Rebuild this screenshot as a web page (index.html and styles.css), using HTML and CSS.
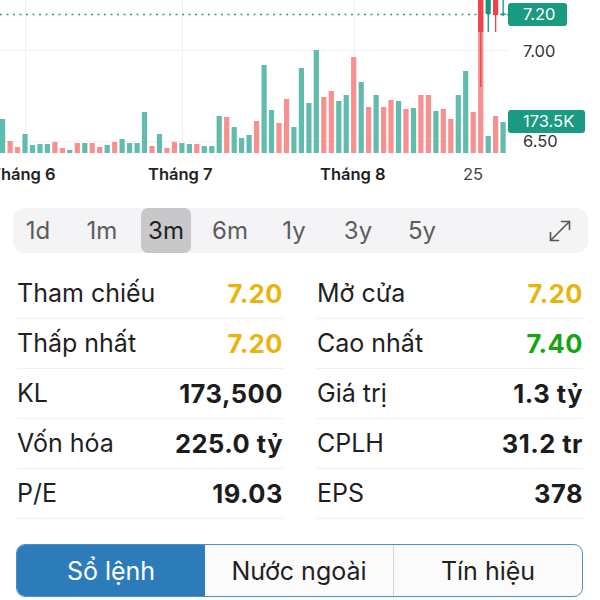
FILE: index.html
```html
<!DOCTYPE html>
<html lang="vi">
<head>
  <meta charset="UTF-8">
  <meta name="viewport" content="width=device-width, initial-scale=1.0">
  <title>Chart</title>
  <link rel="stylesheet" href="styles.css">
</head>

<body>
  <div class="stock-chart">
    <svg class="stock-chart-plot" width="600" height="160" viewBox="0 0 600 160">
      <g stroke="#f1f1f1" stroke-width="1">
        <line x1="0" y1="50.5" x2="508" y2="50.5" />
        <line x1="0" y1="141.5" x2="508" y2="141.5" />
        <line x1="25.5" y1="0" x2="25.5" y2="153" />
        <line x1="182.5" y1="0" x2="182.5" y2="153" />
        <line x1="354.5" y1="0" x2="354.5" y2="153" />
      </g>

      <!-- volume, up days -->
      <g fill="#62bcae">
        <rect x="0" y="119" width="5.2" height="34" />
        <rect x="22.4" y="134" width="5.2" height="19" />
        <rect x="29.9" y="145" width="5.2" height="8" />
        <rect x="37.4" y="144" width="5.2" height="9" />
        <rect x="44.8" y="144" width="5.2" height="9" />
        <rect x="67.2" y="150" width="5.2" height="3" />
        <rect x="82.2" y="143" width="5.2" height="10" />
        <rect x="104.6" y="145" width="5.2" height="8" />
        <rect x="119.5" y="139" width="5.2" height="14" />
        <rect x="127" y="143" width="5.2" height="10" />
        <rect x="134.5" y="143" width="5.2" height="10" />
        <rect x="141.9" y="112" width="5.2" height="41" />
        <rect x="156.9" y="134" width="5.2" height="19" />
        <rect x="179.3" y="143" width="5.2" height="10" />
        <rect x="186.8" y="144" width="5.2" height="9" />
        <rect x="201.7" y="146" width="5.2" height="7" />
        <rect x="209.2" y="146" width="5.2" height="7" />
        <rect x="216.6" y="116" width="5.2" height="37" />
        <rect x="231.6" y="127" width="5.2" height="26" />
        <rect x="239" y="138" width="5.2" height="15" />
        <rect x="246.5" y="135" width="5.2" height="18" />
        <rect x="261.5" y="65" width="5.2" height="88" />
        <rect x="268.9" y="110" width="5.2" height="43" />
        <rect x="291.3" y="127" width="5.2" height="26" />
        <rect x="298.8" y="68" width="5.2" height="85" />
        <rect x="306.3" y="103" width="5.2" height="50" />
        <rect x="313.7" y="50" width="5.2" height="103" />
        <rect x="336.2" y="101" width="5.2" height="52" />
        <rect x="343.6" y="95" width="5.2" height="58" />
        <rect x="358.6" y="82" width="5.2" height="71" />
        <rect x="373.5" y="95" width="5.2" height="58" />
        <rect x="395.9" y="101" width="5.2" height="52" />
        <rect x="410.9" y="108" width="5.2" height="45" />
        <rect x="433.3" y="111" width="5.2" height="42" />
        <rect x="455.7" y="95" width="5.2" height="58" />
        <rect x="463.1" y="71" width="5.2" height="82" />
        <rect x="485.6" y="136" width="5.2" height="17" />
        <rect x="500.5" y="122" width="5.2" height="31" />
      </g>

      <!-- volume, down days -->
      <g fill="#f7908f">
        <rect x="7.5" y="141" width="5.2" height="12" />
        <rect x="14.9" y="147" width="5.2" height="6" />
        <rect x="52.3" y="142" width="5.2" height="11" />
        <rect x="59.8" y="148" width="5.2" height="5" />
        <rect x="74.7" y="143" width="5.2" height="10" />
        <rect x="89.6" y="143" width="5.2" height="10" />
        <rect x="97.1" y="147" width="5.2" height="6" />
        <rect x="112.1" y="142" width="5.2" height="11" />
        <rect x="149.4" y="146" width="5.2" height="7" />
        <rect x="164.3" y="148" width="5.2" height="5" />
        <rect x="171.8" y="142" width="5.2" height="11" />
        <rect x="194.2" y="144" width="5.2" height="9" />
        <rect x="224.1" y="117" width="5.2" height="36" />
        <rect x="254" y="121" width="5.2" height="32" />
        <rect x="276.4" y="123" width="5.2" height="30" />
        <rect x="283.9" y="99" width="5.2" height="54" />
        <rect x="321.2" y="97" width="5.2" height="56" />
        <rect x="328.7" y="91" width="5.2" height="62" />
        <rect x="351.1" y="57" width="5.2" height="96" />
        <rect x="366" y="107" width="5.2" height="46" />
        <rect x="381" y="107" width="5.2" height="46" />
        <rect x="388.4" y="100" width="5.2" height="53" />
        <rect x="403.4" y="109" width="5.2" height="44" />
        <rect x="418.3" y="95" width="5.2" height="58" />
        <rect x="425.8" y="95" width="5.2" height="58" />
        <rect x="440.7" y="109" width="5.2" height="44" />
        <rect x="448.2" y="119" width="5.2" height="34" />
        <rect x="470.6" y="112" width="5.2" height="41" />
        <rect x="478.1" y="0" width="5.2" height="153" />
        <rect x="493" y="116" width="5.2" height="37" />
      </g>

      <line x1="0" y1="14.5" x2="508" y2="14.5" stroke="#2a9d8f" stroke-width="1.6" stroke-dasharray="2 4.5" />

      <!-- last candles -->
      <g fill="#f2414b">
        <rect x="478.1" y="0" width="5.2" height="32" />
        <rect x="480.1" y="0" width="1.3" height="87" />
        <rect x="493" y="0" width="5.2" height="15" />
        <rect x="495" y="0" width="1.3" height="32" />
      </g>
      <g fill="#17977d">
        <rect x="485.6" y="0" width="5.2" height="14" />
        <rect x="487.6" y="0" width="1.3" height="32" />
        <rect x="502.5" y="0" width="1.3" height="16" />
        <rect x="500.5" y="13.5" width="5.2" height="1.5" />
      </g>
    </svg>

    <span class="stock-chart-tag stock-chart-tag-price">7.20</span>
    <span class="stock-chart-price stock-chart-price-top">7.00</span>
    <span class="stock-chart-tag stock-chart-tag-vol">173.5K</span>
    <span class="stock-chart-price stock-chart-price-low">6.50</span>

    <span class="stock-chart-date stock-chart-month" style="left: -10px">Tháng 6</span>
    <span class="stock-chart-date stock-chart-month" style="left: 148px">Tháng 7</span>
    <span class="stock-chart-date stock-chart-month" style="left: 320px">Tháng 8</span>
    <span class="stock-chart-date" style="left: 463px">25</span>
  </div>

  <div class="stock-periods">
    <span class="stock-period">1d</span>
    <span class="stock-period">1m</span>
    <span class="stock-period stock-period-active">3m</span>
    <span class="stock-period">6m</span>
    <span class="stock-period">1y</span>
    <span class="stock-period">3y</span>
    <span class="stock-period">5y</span>
    <svg class="stock-expand" width="26" height="26" viewBox="0 0 26 26" fill="none" stroke="#555" stroke-width="1.6" stroke-linecap="round" stroke-linejoin="round">
      <path d="M3.5 22.5 L22.5 3.5" />
      <path d="M14.5 3.5 H22.5 V11.5" />
      <path d="M3.5 14.5 V22.5 H11.5" />
    </svg>
  </div>

  <div class="stock-stats">
    <div class="stock-stat"><span>Tham chiếu</span><b class="stock-ref">7.20</b></div>
    <div class="stock-stat"><span>Mở cửa</span><b class="stock-ref">7.20</b></div>
    <div class="stock-stat"><span>Thấp nhất</span><b class="stock-ref">7.20</b></div>
    <div class="stock-stat"><span>Cao nhất</span><b class="stock-up">7.40</b></div>
    <div class="stock-stat"><span>KL</span><b>173,500</b></div>
    <div class="stock-stat"><span>Giá trị</span><b>1.3 tỷ</b></div>
    <div class="stock-stat"><span>Vốn hóa</span><b>225.0 tỷ</b></div>
    <div class="stock-stat"><span>CPLH</span><b>31.2 tr</b></div>
    <div class="stock-stat"><span>P/E</span><b>19.03</b></div>
    <div class="stock-stat"><span>EPS</span><b>378</b></div>
  </div>

  <div class="stock-tabs">
    <button type="button" class="stock-tab stock-tab-active">Sổ lệnh</button>
    <button type="button" class="stock-tab">Nước ngoài</button>
    <button type="button" class="stock-tab">Tín hiệu</button>
  </div>
</body>

</html>
```

FILE: styles.css
```css
html,
body {
  margin: 0;
  background: #ffffff;
  color: #1f1f1f;
  font-family: Inter, "Noto Sans", sans-serif;
}

.stock-chart {
  position: relative;
  height: 190px;
  overflow: hidden;
}

.stock-chart-plot {
  display: block;
}

.stock-chart-tag,
.stock-chart-price {
  position: absolute;
  left: 508px;
  padding: 0 11px 0 15px;
  font-size: 16.5px;
}

.stock-chart-tag {
  height: 23px;
  border-radius: 3px;
  line-height: 23px;
  background-color: #1a9a80;
  color: #ffffff;
}
.stock-chart-tag-price {
  top: 3px;
}
.stock-chart-tag-vol {
  top: 110px;
}

.stock-chart-price {
  height: 16px;
  line-height: 16px;
  color: #333333;
}
.stock-chart-price-top {
  top: 43px;
}
.stock-chart-price-low {
  top: 133px;
}

.stock-chart-date {
  position: absolute;
  top: 163px;
  font-size: 16.5px;
  line-height: 23px;
  color: #444444;
}
.stock-chart-month {
  font-weight: 600;
  color: #222222;
}


.stock-periods {
  display: flex;
  align-items: center;
  gap: 14px;
  height: 45px;
  margin: 18px 12px 0 13px;
  border-radius: 12px;
  background-color: #f4f4f6;
}

.stock-period {
  width: 50px;
  height: 45px;
  border-radius: 7px;
  text-align: center;
  font-size: 24px;
  line-height: 45px;
  color: #5c5c5c;
}

.stock-period-active {
  background-color: #c8c8ca;
  color: #1f1f1f;
}

.stock-expand {
  margin-left: auto;
  margin-right: 15px;
}


.stock-stats {
  display: grid;
  grid-template-columns: 1fr 1fr;
  column-gap: 34px;
  margin: 16px 17px 0;
}

.stock-stat {
  display: flex;
  justify-content: space-between;
  align-items: center;
  box-sizing: border-box;
  height: 50px;
  border-bottom: 1px solid #efefef;
  font-size: 25px;
  line-height: 49px;
}

.stock-stat b {
  font-size: 25.5px;
  font-weight: 700;
  letter-spacing: 0.5px;
  color: #1c1c1c;
}
.stock-stat b.stock-ref {
  color: #e8b50e;
}
.stock-stat b.stock-up {
  color: #16a516;
}


.stock-tabs {
  display: flex;
  box-sizing: border-box;
  height: 53px;
  margin: 25px 17px 0 16px;
  border: 1.5px solid #4a91c9;
  border-radius: 9px;
  overflow: hidden;
  background-color: #fbfbfb;
}

.stock-tab {
  flex: 1;
  padding: 0;
  border: none;
  background: none;
  font-family: inherit;
  font-size: 25px;
  color: #1f1f1f;
}
.stock-tab + .stock-tab {
  border-left: 1.5px solid #d6d6d6;
}

.stock-tab-active {
  background-color: #2d7cba;
  color: #ffffff;
}
.stock-tab-active + .stock-tab {
  border-left: none;
}
```
